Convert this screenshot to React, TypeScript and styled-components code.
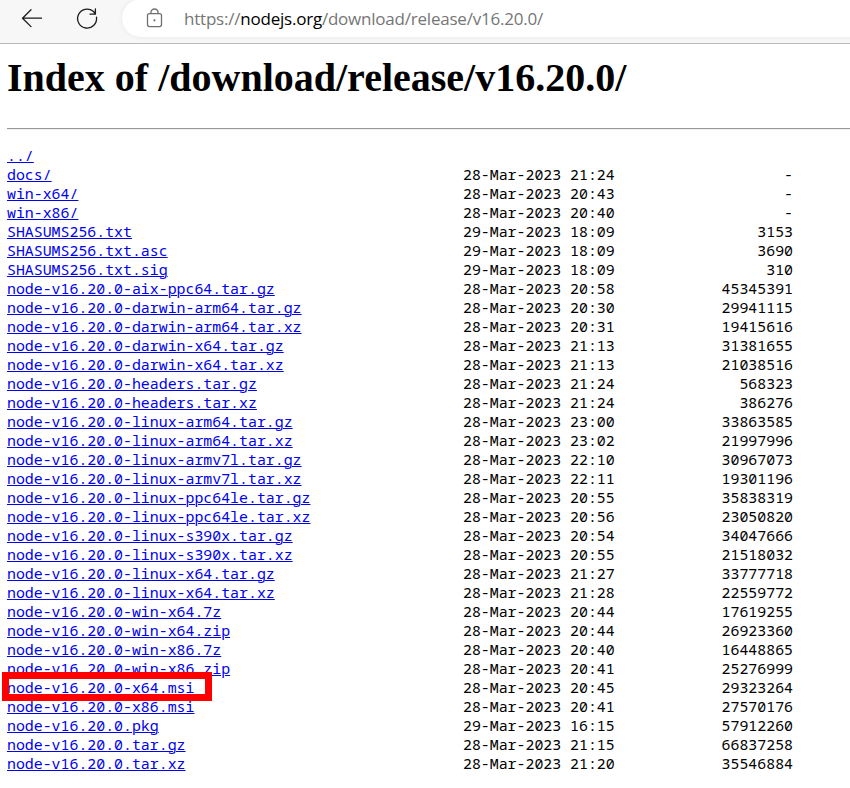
import React from "react";
import styled, { createGlobalStyle } from "styled-components";

const GlobalStyle = createGlobalStyle`
  html, body { margin: 0; padding: 0; background: #fff; overflow: hidden; }
`;

const Page = styled.div`
  width: 850px;
  height: 788px;
  overflow: hidden;
  background: #fff;
  color: #000;
`;

const Toolbar = styled.header`
  display: flex;
  align-items: flex-start;
  height: 43px;
  background: #f7f7f7;
  border-bottom: 1px solid #b9b9b9;
  overflow: hidden;
`;

const NavButtons = styled.div`
  display: flex;
  gap: 31px;
  width: 102px;
  padding: 6px 0 0 20px;
  flex: none;
`;

const Icon = styled.svg`
  display: block;
  flex: none;
  fill: none;
  stroke-linecap: round;
  stroke-linejoin: round;
`;

const AddressBar = styled.div`
  display: flex;
  align-items: center;
  flex: none;
  box-sizing: border-box;
  width: 760px;
  height: 38px;
  margin-top: -1px;
  padding-left: 23px;
  border-radius: 19px;
  background: #fff;
  box-shadow: 0 0 5px rgba(0, 0, 0, 0.07);
`;

const Url = styled.span`
  margin-left: 19px;
  padding-top: 1px;
  font: 400 17px/24px "Open Sans", sans-serif;
  letter-spacing: -0.22px;
  white-space: nowrap;
  color: #767676;
`;

const Host = styled.span`
  color: #000;
`;

const Content = styled.main`
  padding-left: 7px;
`;

const Title = styled.h1`
  margin: 0;
  padding-top: 11px;
  font: 700 40px/46px "Liberation Serif", serif;
  white-space: nowrap;
`;

const Rule = styled.hr`
  height: 1px;
  margin: 27px 0 16px;
  border: 0;
  border-top: 1px solid #9a9a9a;
  background: #eee;
`;

const Listing = styled.div`
  font: 400 14.89px/19px "Noto Sans Mono", "DejaVu Sans Mono", monospace;
`;

const Row = styled.div`
  display: grid;
  grid-template-columns: 456px 170px 160px;
  height: 19px;
  white-space: pre;
`;

const NameCell = styled.span`
  position: relative;
`;

const FileLink = styled.a`
  color: #0000ee;
  text-decoration: underline;
  text-decoration-thickness: 1px;
  text-underline-offset: 1px;
`;

const SizeCell = styled.span`
  text-align: right;
`;

const Highlight = styled.span`
  position: absolute;
  box-sizing: border-box;
  left: -5px;
  top: -6px;
  width: 210px;
  height: 29px;
  border: 7px solid #fe0000;
`;

const files: [string, string, string][] = [
  ["../", "", ""],
  ["docs/", "28-Mar-2023 21:24", "-"],
  ["win-x64/", "28-Mar-2023 20:43", "-"],
  ["win-x86/", "28-Mar-2023 20:40", "-"],
  ["SHASUMS256.txt", "29-Mar-2023 18:09", "3153"],
  ["SHASUMS256.txt.asc", "29-Mar-2023 18:09", "3690"],
  ["SHASUMS256.txt.sig", "29-Mar-2023 18:09", "310"],
  ["node-v16.20.0-aix-ppc64.tar.gz", "28-Mar-2023 20:58", "45345391"],
  ["node-v16.20.0-darwin-arm64.tar.gz", "28-Mar-2023 20:30", "29941115"],
  ["node-v16.20.0-darwin-arm64.tar.xz", "28-Mar-2023 20:31", "19415616"],
  ["node-v16.20.0-darwin-x64.tar.gz", "28-Mar-2023 21:13", "31381655"],
  ["node-v16.20.0-darwin-x64.tar.xz", "28-Mar-2023 21:13", "21038516"],
  ["node-v16.20.0-headers.tar.gz", "28-Mar-2023 21:24", "568323"],
  ["node-v16.20.0-headers.tar.xz", "28-Mar-2023 21:24", "386276"],
  ["node-v16.20.0-linux-arm64.tar.gz", "28-Mar-2023 23:00", "33863585"],
  ["node-v16.20.0-linux-arm64.tar.xz", "28-Mar-2023 23:02", "21997996"],
  ["node-v16.20.0-linux-armv7l.tar.gz", "28-Mar-2023 22:10", "30967073"],
  ["node-v16.20.0-linux-armv7l.tar.xz", "28-Mar-2023 22:11", "19301196"],
  ["node-v16.20.0-linux-ppc64le.tar.gz", "28-Mar-2023 20:55", "35838319"],
  ["node-v16.20.0-linux-ppc64le.tar.xz", "28-Mar-2023 20:56", "23050820"],
  ["node-v16.20.0-linux-s390x.tar.gz", "28-Mar-2023 20:54", "34047666"],
  ["node-v16.20.0-linux-s390x.tar.xz", "28-Mar-2023 20:55", "21518032"],
  ["node-v16.20.0-linux-x64.tar.gz", "28-Mar-2023 21:27", "33777718"],
  ["node-v16.20.0-linux-x64.tar.xz", "28-Mar-2023 21:28", "22559772"],
  ["node-v16.20.0-win-x64.7z", "28-Mar-2023 20:44", "17619255"],
  ["node-v16.20.0-win-x64.zip", "28-Mar-2023 20:44", "26923360"],
  ["node-v16.20.0-win-x86.7z", "28-Mar-2023 20:40", "16448865"],
  ["node-v16.20.0-win-x86.zip", "28-Mar-2023 20:41", "25276999"],
  ["node-v16.20.0-x64.msi", "28-Mar-2023 20:45", "29323264"],
  ["node-v16.20.0-x86.msi", "28-Mar-2023 20:41", "27570176"],
  ["node-v16.20.0.pkg", "29-Mar-2023 16:15", "57912260"],
  ["node-v16.20.0.tar.gz", "28-Mar-2023 21:15", "66837258"],
  ["node-v16.20.0.tar.xz", "28-Mar-2023 21:20", "35546884"],
];

const HIGHLIGHTED = "node-v16.20.0-x64.msi";

export default function App() {
  return (
    <Page>
      <GlobalStyle />
      <Toolbar>
        <NavButtons>
          <Icon width="24" height="24" viewBox="20 6 24 24" stroke="#1b1b1b" strokeWidth="1.3">
            <path d="M41.5 18.2H22.5M31 9.8L22.5 18.2L31 26.6" />
          </Icon>
          <Icon width="24" height="24" viewBox="75 6 24 24" stroke="#1b1b1b" strokeWidth="1.3">
            <path d="M96.5 17.2A9.5 9.5 0 1 1 93.2 11.3L95.4 13.8M95.4 9V14.2H90" />
          </Icon>
        </NavButtons>
        <AddressBar>
          <Icon
            width="20"
            height="22"
            viewBox="145 7 20 22"
            stroke="#707070"
            strokeWidth="1.3"
          >
            <rect x="147.5" y="13.6" width="14" height="13" rx="2" />
            <path d="M150.9 13.5V12.6A3.6 3.6 0 0 1 158.1 12.6V13.5" />
            <circle cx="154.5" cy="20.3" r="1.1" fill="#707070" stroke="none" />
          </Icon>
          <Url>
            https://<Host>nodejs.org</Host>/download/release/v16.20.0/
          </Url>
        </AddressBar>
      </Toolbar>
      <Content>
        <Title>Index of /download/release/v16.20.0/</Title>
        <Rule />
        <Listing>
          {files.map(([name, date, size]) => (
            <Row key={name}>
              <NameCell>
                <FileLink>{name}</FileLink>
                {name === HIGHLIGHTED && <Highlight />}
              </NameCell>
              <span>{date}</span>
              <SizeCell>{size}</SizeCell>
            </Row>
          ))}
        </Listing>
      </Content>
    </Page>
  );
}
